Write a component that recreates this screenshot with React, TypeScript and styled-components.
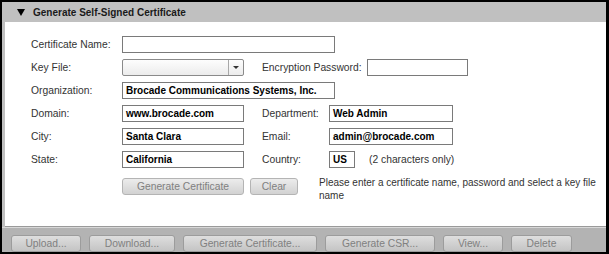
import React from 'react';
import styled, { createGlobalStyle } from 'styled-components';

const GlobalStyle = createGlobalStyle`
  html, body {
    margin: 0;
    padding: 0;
    background: #fff;
  }
  body {
    font-family: "Liberation Sans", Arial, sans-serif;
  }
`;

const Frame = styled.div`
  width: 609px;
  height: 254px;
  box-sizing: border-box;
  border: 2px solid #000;
  border-right-width: 3px;
  background: #c0c0c0;
  display: flex;
  flex-direction: column;
`;

const Header = styled.div`
  height: 20px;
  display: flex;
  align-items: center;
  gap: 8px;
  padding-left: 15px;
  font-size: 10px;
  font-weight: bold;
  color: #1a1a1a;
`;

const Triangle = styled.span`
  width: 0;
  height: 0;
  border-left: 4.5px solid transparent;
  border-right: 4.5px solid transparent;
  border-top: 7px solid #000;
`;

const Body = styled.div`
  flex: 1;
  margin-left: 3px;
  background: #fff;
  padding: 14px 0 0 26px;
  display: flex;
  flex-direction: column;
  gap: 6px;
  border-bottom: 1px solid #9a9a9a;
`;

const Row = styled.div`
  display: flex;
  align-items: center;
  height: 17px;
`;

const Label = styled.span<{ $w: number }>`
  width: ${p => p.$w}px;
  flex: none;
  font-size: 10.3px;
  color: #333;
`;

const Input = styled.div<{ $w: number; $gap?: number }>`
  width: ${p => p.$w}px;
  height: 17px;
  box-sizing: border-box;
  flex: none;
  margin-right: ${p => p.$gap ?? 0}px;
  border: 1px solid #7a7a7a;
  background: #fff;
  padding-left: 3px;
  font-size: 10px;
  font-weight: bold;
  color: #000;
  line-height: 15px;
  white-space: nowrap;
  overflow: hidden;
`;

const Select = styled.div`
  width: 122px;
  height: 17px;
  box-sizing: border-box;
  flex: none;
  margin-right: 18px;
  border: 1px solid #8a8a8a;
  border-radius: 2px;
  background: linear-gradient(#fdfdfd, #ececec);
  display: flex;
  justify-content: flex-end;
`;

const SelectArrow = styled.span`
  width: 14px;
  border-left: 1px solid #a8a8a8;
  display: flex;
  align-items: center;
  justify-content: center;

  &::after {
    content: '';
    border-left: 3px solid transparent;
    border-right: 3px solid transparent;
    border-top: 3px solid #333;
  }
`;

const Hint = styled.span`
  margin-left: 14px;
  font-size: 10.3px;
  color: #333;
`;

const ActionRow = styled.div`
  display: flex;
  align-items: flex-start;
  margin-top: 4px;
  padding-left: 91px;
`;

const Button = styled.div<{ $w: number }>`
  width: ${p => p.$w}px;
  height: 17px;
  box-sizing: border-box;
  flex: none;
  border: 1px solid #b4b4b4;
  border-radius: 3px;
  background: linear-gradient(#ececec, #d2d2d2);
  color: #808080;
  font-size: 10.3px;
  display: flex;
  align-items: center;
  justify-content: center;
`;

const Buttons = styled.div`
  display: flex;
  gap: 6px;
`;

const Message = styled.div`
  margin-left: 21px;
  width: 284px;
  font-size: 10px;
  line-height: 13px;
  color: #333;
  margin-top: -2px;
`;

const Footer = styled.div`
  height: 25px;
  box-sizing: border-box;
  border-top: 1px solid #d8d8d8;
  background: #b3b3b3;
  padding: 7px 0 0 9px;
  display: flex;
  gap: 8px;
`;

const FooterButton = styled(Button)`
  border-color: #9c9c9c;
  background: linear-gradient(#dedede, #c4c4c4);
  color: #808080;
`;

export default function App() {
  return (
    <>
      <GlobalStyle />
      <Frame>
        <Header>
          <Triangle />
          Generate Self-Signed Certificate
        </Header>
        <Body>
          <Row>
            <Label $w={91}>Certificate Name:</Label>
            <Input $w={213} />
          </Row>
          <Row>
            <Label $w={91}>Key File:</Label>
            <Select>
              <SelectArrow />
            </Select>
            <Label $w={105}>Encryption Password:</Label>
            <Input $w={101} />
          </Row>
          <Row>
            <Label $w={91}>Organization:</Label>
            <Input $w={213}>Brocade Communications Systems, Inc.</Input>
          </Row>
          <Row>
            <Label $w={91}>Domain:</Label>
            <Input $w={122} $gap={18}>www.brocade.com</Input>
            <Label $w={67}>Department:</Label>
            <Input $w={124}>Web Admin</Input>
          </Row>
          <Row>
            <Label $w={91}>City:</Label>
            <Input $w={122} $gap={18}>Santa Clara</Input>
            <Label $w={67}>Email:</Label>
            <Input $w={124}>admin@brocade.com</Input>
          </Row>
          <Row>
            <Label $w={91}>State:</Label>
            <Input $w={122} $gap={18}>California</Input>
            <Label $w={67}>Country:</Label>
            <Input $w={26}>US</Input>
            <Hint>(2 characters only)</Hint>
          </Row>
          <ActionRow>
            <Buttons>
              <Button $w={122}>Generate Certificate</Button>
              <Button $w={48}>Clear</Button>
            </Buttons>
            <Message>
              Please enter a certificate name, password and select a key file name
            </Message>
          </ActionRow>
        </Body>
        <Footer>
          <FooterButton $w={70}>Upload...</FooterButton>
          <FooterButton $w={86}>Download...</FooterButton>
          <FooterButton $w={134}>Generate Certificate...</FooterButton>
          <FooterButton $w={110}>Generate CSR...</FooterButton>
          <FooterButton $w={60}>View...</FooterButton>
          <FooterButton $w={61}>Delete</FooterButton>
        </Footer>
      </Frame>
    </>
  );
}
